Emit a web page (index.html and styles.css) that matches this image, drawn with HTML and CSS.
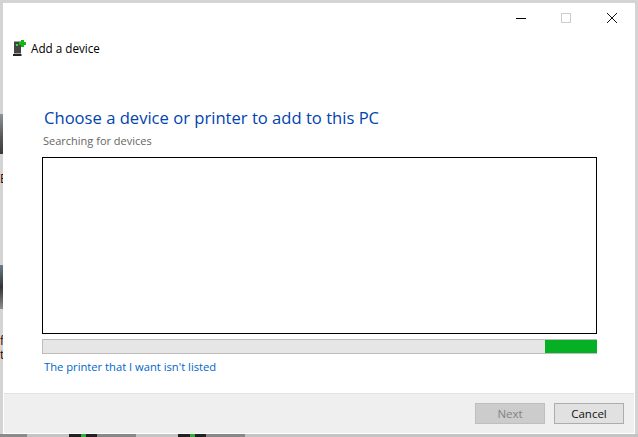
FILE: index.html
```html
<!DOCTYPE html>
<html lang="en">
<head>
<meta charset="utf-8">
<title>Add a device</title>
<link rel="stylesheet" href="styles.css">
</head>
<body>
<div class="desktop">
  <div class="bg-thumb bg-thumb-a"></div>
  <div class="bg-thumb bg-thumb-b"></div>
  <span class="bg-letter bg-letter-a">E</span>
  <span class="bg-letter bg-letter-b">f</span>
  <span class="bg-letter bg-letter-c">t</span>
  <div class="bg-strip"><i class="bg-dot bg-dot-a"></i><i class="bg-dot bg-dot-b"></i></div>
  <div class="window">
    <div class="titlebar">
      <svg class="ctl ctl-min" width="12" height="12" viewBox="0 0 12 12"><path d="M1 6.500h10" stroke="#000" fill="none"/></svg>
      <svg class="ctl ctl-max" width="12" height="12" viewBox="0 0 12 12"><rect x="1.500" y="1.500" width="9" height="9" stroke="#ccc" fill="none"/></svg>
      <svg class="ctl ctl-close" width="12" height="12" viewBox="0 0 12 12"><path d="M1 1l10 10M11 1L1 11" stroke="#111" fill="none"/></svg>
    </div>
    <div class="app-head">
      <svg class="app-icon" width="14" height="16" viewBox="0 0 14 16">
        <path d="M1 1.500h7v12H1z" fill="#444"/>
        <path d="M0 14h8.500v2H0z" fill="#222"/>
        <path d="M3 4h2v2H3z" fill="#3ddc3d"/>
        <path d="M8 0h3v2h2v3h-2v2H8V5H6V2h2z" fill="#12b812"/>
      </svg>
      <span class="app-title">Add a device</span>
    </div>
    <main class="content">
      <h1 class="heading">Choose a device or printer to add to this PC</h1>
      <p class="status">Searching for devices</p>
      <div class="list"></div>
      <div class="progress"><div class="progress-fill"></div></div>
      <a class="link" href="#">The printer that I want isn't listed</a>
    </main>
    <footer class="footer">
      <button class="btn btn-disabled" disabled>Next</button>
      <button class="btn">Cancel</button>
    </footer>
  </div>
</div>
</body>
</html>
```
FILE: styles.css
```css
* { box-sizing: border-box; }
html, body { margin: 0; height: 100%; overflow: hidden; }
body { font-family: "Open Sans", "Noto Sans", sans-serif; }
.desktop {
  position: relative;
  width: 638px;
  height: 437px;
  padding: 3px;
  background: #d4d4d4;
}
.window {
  position: relative;
  width: 632px;
  height: 431px;
  background: #fff;
  display: flex;
  flex-direction: column;
}
.titlebar {
  height: 28px;
  flex: none;
  display: flex;
  justify-content: flex-end;
  align-items: flex-start;
  padding: 9px 17px 0 0;
}
.ctl { display: block; }
.ctl-max { margin-left: 33px; }
.ctl-close { margin-left: 34px; }
.app-head {
  height: 34px;
  flex: none;
  display: flex;
  align-items: center;
  padding: 0 0 0 10px;
}
.app-icon { display: block; margin-right: 4px; }
.app-title { font-size: 11.700px; line-height: 16px; color: #000; }
.content {
  flex: 1;
  padding: 0 38px 0 39px;
  display: flex;
  flex-direction: column;
}
.heading {
  margin: 41px 0 0 2px;
  font-size: 16.600px;
  line-height: 24px;
  font-weight: 400;
  color: #0044b0;
}
.status {
  margin: 4px 0 0 1px;
  font-size: 11px;
  line-height: 14px;
  color: #666;
}
.list {
  margin-top: 9px;
  height: 177px;
  border: 1px solid #000;
  background: #fff;
}
.progress {
  margin-top: 5px;
  height: 15px;
  border: 1px solid #bcbcbc;
  border-width: 1px 0 1px 1px;
  background: #e6e6e6;
  display: flex;
  justify-content: flex-end;
}
.progress-fill { width: 52px; background: #06b025; }
.link {
  margin: 5px 0 0 2px;
  font-size: 11.200px;
  line-height: 16px;
  color: #0066cc;
  text-decoration: none;
}
.footer {
  height: 40px;
  flex: none;
  margin: 0 1px 1px;
  background: #efefef;
  border-top: 1px solid #e2e2e2;
  display: flex;
  justify-content: flex-end;
  align-items: flex-start;
  gap: 9px;
  padding: 9px 10px 0 0;
}
.btn {
  width: 70px;
  height: 21px;
  padding: 0;
  border: 1px solid #adadad;
  background: #e1e1e1;
  font-family: inherit;
  font-size: 11.500px;
  line-height: 17px;
  color: #111;
}
.btn-disabled { background: #cccccc; border-color: #bfbfbf; color: #838383; }
.bg-thumb { position: absolute; left: 0; width: 3px; background: #555; }
.bg-thumb-a { top: 114px; height: 40px; background: linear-gradient(#8a9296, #555 60%, #3a3a3a); }
.bg-thumb-b { top: 265px; height: 44px; background: linear-gradient(#6b7d88, #333 50%, #8e8e8e); }
.bg-letter {
  position: absolute;
  left: 0;
  width: 3px;
  overflow: hidden;
  font-size: 12px;
  line-height: 12px;
  color: #300;
}
.bg-letter-a { top: 173px; }
.bg-letter-b { top: 335px; }
.bg-letter-c { top: 349px; }
.bg-strip {
  position: absolute;
  left: 0;
  right: 0;
  bottom: 0;
  height: 3px;
  background: linear-gradient(90deg, #8a8a8a 0 27px, #c4c4c4 27px 69px, #222 69px 97px, #888 97px 136px, #c4c4c4 136px 178px, #222 178px 206px, #888 206px 245px, #c4c4c4 245px);
}
.bg-dot { position: absolute; top: 0; width: 5px; height: 3px; background: #2fae3a; }
.bg-dot-a { left: 81px; }
.bg-dot-b { left: 190px; }
```
